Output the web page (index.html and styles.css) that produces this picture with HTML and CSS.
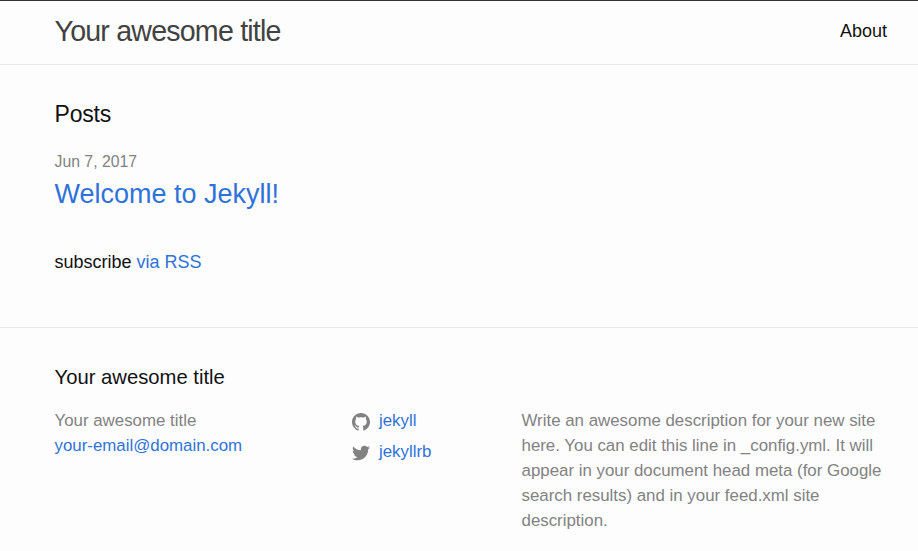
FILE: index.html
```html
<!DOCTYPE html>
<html lang="en">
<head>
<meta charset="utf-8">
<title>Your awesome title</title>
<link rel="stylesheet" href="styles.css">
</head>
<body>
<header class="site-header">
  <a class="site-title" href="#">Your awesome title</a>
  <nav class="site-nav"><a href="#">About</a></nav>
</header>
<main class="page-content">
  <h1 class="page-heading">Posts</h1>
  <span class="post-meta">Jun 7, 2017</span>
  <h2 class="post-title"><a class="link" href="#">Welcome to Jekyll!</a></h2>
  <p class="rss">subscribe <a class="link" href="#">via RSS</a></p>
</main>
<footer class="site-footer">
  <h2 class="footer-heading">Your awesome title</h2>
  <div class="footer-cols">
    <ul class="contact">
      <li>Your awesome title</li>
      <li><a class="link" href="#">your-email@domain.com</a></li>
    </ul>
    <ul class="social">
      <li><svg class="icon" viewBox="0 0 16 16"><path d="M8 0C3.58 0 0 3.582 0 8c0 3.535 2.292 6.533 5.47 7.59.4.075.547-.172.547-.385 0-.19-.007-.693-.01-1.36-2.226.483-2.695-1.073-2.695-1.073-.364-.924-.89-1.17-.89-1.17-.725-.496.056-.486.056-.486.803.056 1.225.824 1.225.824.714 1.223 1.873.87 2.33.665.072-.517.278-.87.507-1.07-1.777-.2-3.644-.888-3.644-3.953 0-.873.31-1.587.823-2.147-.09-.202-.36-1.015.07-2.117 0 0 .67-.215 2.2.82.64-.178 1.32-.266 2-.27.68.004 1.36.092 2 .27 1.52-1.035 2.19-.82 2.19-.82.43 1.102.16 1.915.08 2.117.51.56.82 1.274.82 2.147 0 3.073-1.87 3.75-3.65 3.947.28.24.54.73.54 1.48 0 1.07-.01 1.93-.01 2.19 0 .21.14.46.55.38C13.71 14.53 16 11.53 16 8c0-4.418-3.582-8-8-8"/></svg><a class="link" href="#">jekyll</a></li>
      <li><svg class="icon" viewBox="0 0 16 16"><path d="M15.969 3.058c-.586.26-1.217.436-1.878.515.675-.405 1.194-1.045 1.438-1.809-.632.375-1.332.647-2.076.793-.596-.636-1.446-1.033-2.387-1.033-1.806 0-3.27 1.464-3.27 3.27 0 .256.029.506.085.745C5.163 5.404 2.753 4.102 1.14 2.124c-.281.482-.442 1.044-.442 1.643 0 1.134.577 2.135 1.455 2.722-.536-.016-1.04-.164-1.481-.409v.041c0 1.584 1.127 2.906 2.623 3.206-.274.075-.563.115-.861.115-.211 0-.416-.021-.615-.059.416 1.299 1.624 2.245 3.055 2.271-1.119.877-2.529 1.4-4.061 1.4-.264 0-.524-.015-.78-.046 1.447.928 3.166 1.469 5.013 1.469 6.015 0 9.304-4.983 9.304-9.304 0-.142-.003-.283-.009-.423.639-.461 1.193-1.037 1.632-1.692z"/></svg><a class="link" href="#">jekyllrb</a></li>
    </ul>
    <p class="description">Write an awesome description for your new site here. You can edit this line in _config.yml. It will appear in your document head meta (for Google search results) and in your feed.xml site description.</p>
  </div>
</footer>
</body>
</html>
```
FILE: styles.css
```css
* { box-sizing: border-box; margin: 0; padding: 0; }
body { background: #fdfdfd; color: #111; font: 18px/27px "Liberation Sans", Arial, sans-serif; overflow: hidden; }
a { color: inherit; text-decoration: none; }
ul { list-style: none; }
.link { color: #2f73da; }
.site-header { display: flex; justify-content: space-between; height: 65px; padding: 0 31px 0 54.5px; border-top: 1px solid #333; border-bottom: 1px solid #e8e8e8; line-height: 60px; }
.site-title { font-size: 28.6px; letter-spacing: -0.8px; color: #424242; }
.page-content { height: 262px; padding: 33px 54.5px 0; }
.page-heading { font-size: 23px; font-weight: 400; letter-spacing: -0.2px; line-height: 32px; }
.post-meta { display: block; margin-top: 19px; font-size: 15.8px; line-height: 26px; color: #828282; }
.post-title { font-size: 27px; font-weight: 400; line-height: 39px; }
.rss { margin-top: 35px; }
.site-footer { height: 224px; padding: 34px 31px 0 54.5px; border-top: 1px solid #e8e8e8; }
.footer-heading { font-size: 20.25px; font-weight: 400; line-height: 30px; }
.footer-cols { display: grid; grid-template-columns: 297.5px 169.5px 366px; margin-top: 16px; font-size: 16.88px; line-height: 25px; color: #828282; }
.social li { display: flex; align-items: center; margin-bottom: 6px; }
.icon { width: 18px; height: 18px; margin: 3px 9px 0 0; fill: #828282; }
```
